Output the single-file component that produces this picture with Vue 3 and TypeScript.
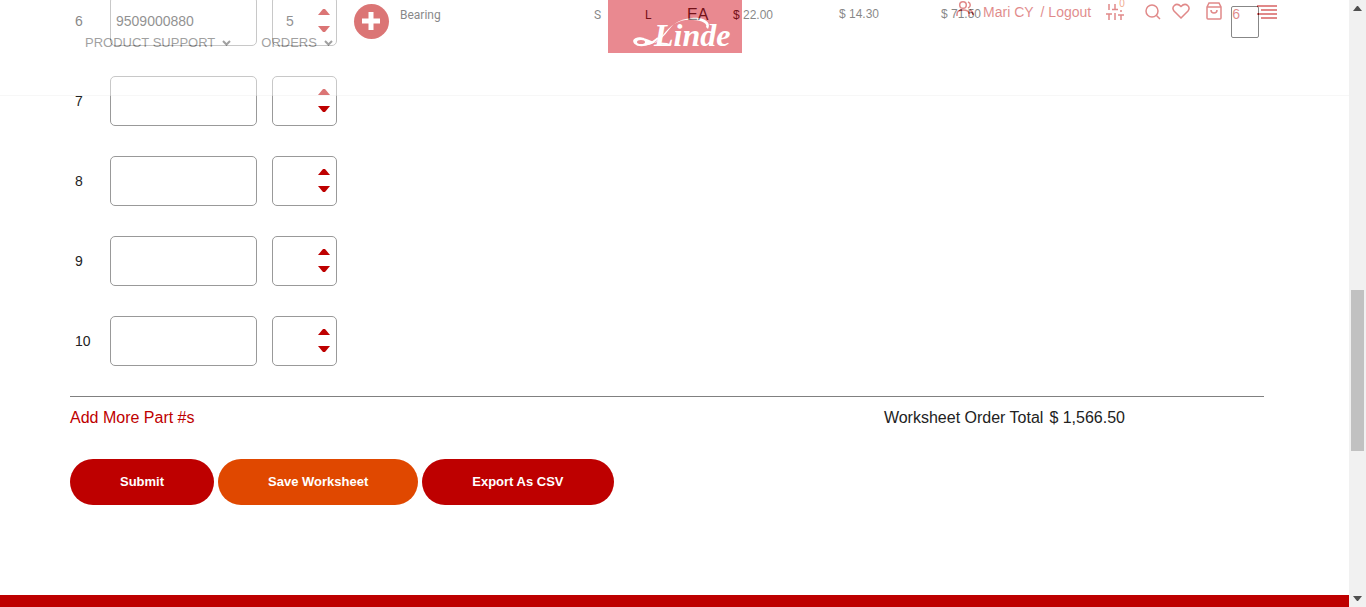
<script setup lang="ts">
import { ref } from 'vue'

interface Line {
  no: number
  part: string
  qty: string
  item?: { name: string; stock: string; type: string; unit: string; list: string; net: string; total: string }
}

const lines = ref<Line[]>([
  {
    no: 6,
    part: '9509000880',
    qty: '5',
    item: { name: 'Bearing', stock: 'S', type: 'L', unit: 'EA', list: '$ 22.00', net: '$ 14.30', total: '$ 71.50' },
  },
  { no: 7, part: '', qty: '' },
  { no: 8, part: '', qty: '' },
  { no: 9, part: '', qty: '' },
  { no: 10, part: '', qty: '' },
])

const menus = ['PRODUCT SUPPORT', 'ORDERS']

function step(line: Line, by: number) {
  line.qty = String(Math.max(0, Number(line.qty || 0) + by))
}

function addLine() {
  lines.value.push({ no: lines.value.length + 6, part: '', qty: '' })
}
</script>

<template>
  <div class="window">
    <div class="page">
      <header class="header">
        <nav class="menu">
          <a v-for="m in menus" :key="m" href="#">
            {{ m }}
            <svg width="9" height="6" viewBox="0 0 9 6"><path d="M1 1l3.5 3.5L8 1" /></svg>
          </a>
        </nav>
        <a class="logo" href="#" aria-label="Linde">
          <svg width="134" height="54" viewBox="0 0 134 54">
            <rect width="134" height="53" fill="#d0000f" />
            <path
              d="M100 29C104 22 95 17 84 18C70 19 62 26 55 35C49 43 40 47 31 45C23 42 26 37 34 38C43 39 49 46 64 45C60 42 50 42 47 43C56 38 60 30 66 24C73 20 79 19 85 20C94 20 100 24 98 27Z"
              fill="#fff"
            />
            <path
              d="M36 39C29 37 24 40 27 43C32 48 44 44 50 38"
              fill="none" stroke="#fff" stroke-width="2"
            />
            <ellipse cx="33" cy="42" rx="4" ry="2" fill="#d0000f" />
            <text x="46" y="46" class="brand">Linde</text>
          </svg>
        </a>
        <div class="tools">
          <a href="#" class="user">
            <svg width="18" height="18" viewBox="0 0 18 18">
              <circle cx="7" cy="5" r="3.3" /><path d="M1 16v-2c0-3 2-4 6-4s6 1 6 4v2M12 2c3 1 3 5 0 6M14 10c2 1 3 2 3 5" />
            </svg>
            Mari CY
          </a>
          <a href="#" class="logout">/ Logout</a>
          <a href="#" class="icon compare" aria-label="Compare">
            <svg width="18" height="18" viewBox="0 0 18 18">
              <path d="M3 1v6M3 11v6M0 11h6M9 1v6M9 10v7M6 6.500h6M15 7v2M15 12v5M12 12h6" />
            </svg>
            <span class="count">0</span>
          </a>
          <a href="#" class="icon search" aria-label="Search">
            <svg width="16" height="16" viewBox="0 0 16 16"><circle cx="7" cy="7" r="6" /><path d="M11.5 11.5L15 15" /></svg>
          </a>
          <a href="#" class="icon heart" aria-label="Wish list">
            <svg width="18" height="16" viewBox="0 0 18 16"><path d="M9 15L2 8C-1 4 4-1.500 9 3.500C14-1.500 19 4 16 8Z" /></svg>
          </a>
          <a href="#" class="icon bag" aria-label="Cart">
            <svg width="16" height="18" viewBox="0 0 16 18"><path d="M1 5l2-4h10l2 4v11q0 1-1 1H2q-1 0-1-1zM1 5h14M5 8c0 4 6 4 6 0" /></svg>
            <span>6</span>
          </a>
          <button class="burger" aria-label="Menu">
            <svg width="20" height="16" viewBox="0 0 20 16"><path d="M0 2h20M4 6h16M0 10h20M4 14h16" /></svg>
          </button>
        </div>
      </header>

      <main class="content">
        <table class="lines">
          <colgroup>
            <col class="w-no" /><col class="w-part" /><col class="w-qty" /><col class="w-add" /><col class="w-name" />
            <col class="w-stock" /><col class="w-type" /><col class="w-unit" /><col class="w-list" /><col class="w-net" />
            <col /><col class="w-check" />
          </colgroup>
          <tbody>
            <tr v-for="line in lines" :key="line.no">
              <td class="no">{{ line.no }}</td>
              <td><input v-model="line.part" class="part" type="text" :aria-label="`Part number ${line.no}`" /></td>
              <td>
                <div class="qty">
                  <input v-model="line.qty" type="text" :aria-label="`Quantity ${line.no}`" />
                  <div class="steps">
                    <button aria-label="Increase" @click="step(line, 1)">
                      <svg width="12" height="6" viewBox="0 0 12 6"><path d="M0 6L5 0h2l5 6z" /></svg>
                    </button>
                    <button aria-label="Decrease" @click="step(line, -1)">
                      <svg width="12" height="6" viewBox="0 0 12 6"><path d="M0 0l5 6h2l5-6z" /></svg>
                    </button>
                  </div>
                </div>
              </td>
              <template v-if="line.item">
                <td>
                  <button class="add" aria-label="Add">
                    <svg width="18" height="18" viewBox="0 0 18 18"><path d="M9 0v18M0 9h18" /></svg>
                  </button>
                </td>
                <td class="name">{{ line.item.name }}</td>
                <td class="name">{{ line.item.stock }}</td>
                <td class="name">{{ line.item.type }}</td>
                <td class="unit">{{ line.item.unit }}</td>
                <td class="name list">{{ line.item.list }}</td>
                <td class="money">{{ line.item.net }}</td>
                <td class="money">{{ line.item.total }}</td>
                <td><input class="check" type="checkbox" aria-label="Select line" /></td>
              </template>
              <td v-else colspan="9"></td>
            </tr>
          </tbody>
        </table>

        <div class="summary">
          <a href="#" @click.prevent="addLine">Add More Part #s</a>
          <p class="total"><span>Worksheet Order Total</span><span>$ 1,566.50</span></p>
        </div>
        <div class="actions">
          <button>Submit</button>
          <button class="save">Save Worksheet</button>
          <button>Export As CSV</button>
        </div>
      </main>
      <footer class="footer"></footer>
    </div>

    <div class="scrollbar">
      <svg width="9" height="5" viewBox="0 0 9 5"><path d="M0 5L4 0h1l4 5z" /></svg>
      <div class="track"><div class="thumb"></div></div>
      <svg width="9" height="5" viewBox="0 0 9 5"><path d="M0 0l4 5h1l4-5z" /></svg>
    </div>
  </div>
</template>

<style>
body {
  margin: 0;
}
</style>

<style scoped>
* {
  box-sizing: border-box;
}
.window {
  display: flex;
  height: 100vh;
  overflow: hidden;
  background: #fff;
  color: #222;
  font: 14px/20px "Liberation Sans", Arial, sans-serif;
}
a {
  color: #be0000;
  text-decoration: none;
}
button {
  padding: 0;
  border: 0;
  background: none;
  font: inherit;
  cursor: pointer;
}
svg {
  display: block;
}
.page {
  position: relative;
  flex: 1;
  min-width: 0;
  display: flex;
  flex-direction: column;
}
.header {
  position: absolute;
  inset: 0 0 auto;
  z-index: 2;
  display: grid;
  grid-template-columns: 1fr 134px 1fr;
  height: 96px;
  padding: 0 72px;
  border-bottom: 1px solid #eee;
  background: #fff;
  opacity: 0.46;
}
.menu {
  display: flex;
  gap: 30px;
  padding: 33px 0 0 13px;
  font-size: 13px;
}
.menu a {
  display: flex;
  align-items: center;
  gap: 7px;
  height: 20px;
  color: #333;
}
.menu svg {
  fill: none;
  stroke: #333;
  stroke-width: 2;
}
.brand {
  fill: #fff;
  font: italic bold 32px "Liberation Serif", serif;
}
.tools {
  display: flex;
  justify-content: flex-end;
  align-items: flex-start;
  padding-top: 2px;
}
.tools svg {
  fill: none;
  stroke: #be0000;
  stroke-width: 1.5;
}
.user {
  display: flex;
  gap: 9px;
}
.user svg {
  margin-top: -2px;
}
.logout {
  margin: 0 15px 0 7px;
}
.icon {
  position: relative;
  display: flex;
  padding-top: 2px;
}
.compare {
  padding-top: 1px;
}
.count {
  position: absolute;
  left: 13px;
  top: -3px;
  color: #e04800;
  font-size: 10px;
  line-height: 10px;
}
.search {
  margin-left: 21px;
}
.heart {
  margin-left: 11px;
  padding-top: 1px;
}
.bag {
  gap: 10px;
  margin-left: 16px;
  padding-top: 0;
}
.bag span {
  padding-top: 2px;
}
.burger {
  margin-left: 17px;
  padding-top: 2px;
}
.tools .burger svg {
  stroke-width: 2;
}
.content {
  padding: 0 85px 0 70px;
}
.lines {
  width: 100%;
  margin-top: -4px;
  table-layout: fixed;
  border-collapse: collapse;
}
.w-no { width: 40px; }
.w-part { width: 162px; }
.w-qty { width: 82px; }
.w-add { width: 46px; }
.w-name { width: 194px; }
.w-stock { width: 51px; }
.w-type { width: 42px; }
.w-unit { width: 46px; }
.w-list { width: 106px; }
.w-net { width: 102px; }
.w-check { width: 33px; }
td {
  height: 80px;
  padding: 0;
  vertical-align: top;
}
.no {
  padding-left: 5px;
  line-height: 50px;
}
.part,
.qty {
  height: 50px;
  border: 1px solid #999;
  border-radius: 5px;
  background: #fff;
}
.part {
  display: block;
  width: 147px;
  padding: 0 5px;
  color: #333;
  font: inherit;
}
.qty {
  display: flex;
  align-items: center;
  width: 65px;
  padding: 0 6px 0 13px;
}
.qty input {
  flex: 1;
  min-width: 0;
  height: 48px;
  padding: 0;
  border: 0;
  color: #333;
  font: inherit;
}
.steps {
  display: grid;
  gap: 11px;
  padding-bottom: 2px;
}
.steps button {
  display: block;
}
.steps svg {
  fill: #be0000;
}
.add {
  display: block;
  width: 35px;
  height: 35px;
  margin-top: 8px;
  padding: 0 0 1px 8px;
  border-radius: 50%;
  background: #be0000;
}
.add svg {
  stroke: #fff;
  stroke-width: 5;
}
.name,
.money {
  font-size: 12px;
  line-height: 38px;
}
.name {
  font-family: Roboto, sans-serif;
}
.list {
  font-family: inherit;
}
.money {
  line-height: 36px;
}
.unit {
  font-size: 16px;
  line-height: 38px;
}
.check {
  display: block;
  appearance: none;
  width: 28px;
  height: 32px;
  margin: 10px 0 0;
  border: 1px solid #222;
  border-radius: 2px;
}
.summary {
  display: flex;
  justify-content: space-between;
  padding: 11px 139px 0 0;
  border-top: 1px solid #808080;
  font-size: 16px;
}
.total {
  display: flex;
  gap: 6px;
  margin: 0;
}
.actions {
  display: flex;
  gap: 4px;
  padding: 31px 0 90px;
}
.actions button {
  height: 46px;
  padding: 0 50px;
  border-radius: 23px;
  background: #be0000;
  color: #fff;
  font-size: 13px;
  font-weight: bold;
}
.actions .save {
  background: #e04800;
}
.footer {
  flex: 1;
  background: #be0000;
}
.scrollbar {
  display: flex;
  flex-direction: column;
  align-items: center;
  width: 17px;
  padding: 6px 2px;
  background: #f1f1f1;
}
.scrollbar svg {
  fill: #505050;
}
.track {
  flex: 1;
  width: 13px;
  padding-top: 279px;
}
.thumb {
  height: 161px;
  background: #c1c1c1;
}
</style>
